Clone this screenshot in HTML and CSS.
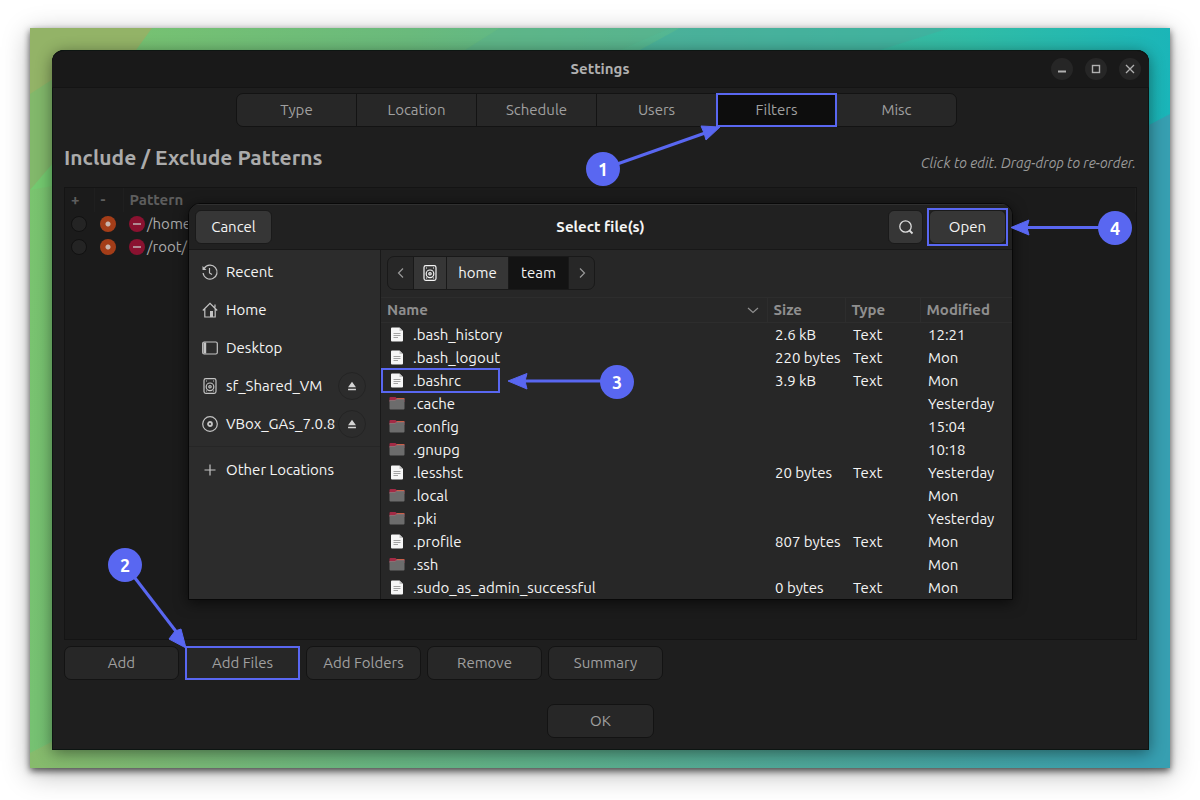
FILE: index.html
```html
<!DOCTYPE html>
<html lang="en">
<head>
<meta charset="utf-8">
<title>Settings</title>
<link rel="stylesheet" href="styles.css">
</head>
<body>
<svg class="sprite" aria-hidden="true">
  <symbol id="i-file" viewBox="0 0 16 16">
    <path d="M2 1.500a1 1 0 0 1 1-1h7.500l3.500 3.500v9.500a1 1 0 0 1-1 1h-10a1 1 0 0 1-1-1z" fill="#f6f6f6"/>
    <path d="M10.500 0.500l3.500 3.500h-3.500z" fill="#c4c4c4"/>
    <path d="M4.500 6.500h7M4.500 8.500h7M4.500 10.500h4.500" stroke="#a2a2a2" stroke-width="1"/>
  </symbol>
  <symbol id="i-folder" viewBox="0 0 16 16">
    <path d="M.5 2a1 1 0 0 1 1-1h5l1 1h7a1 1 0 0 1 1 1v3h-15z" fill="#a32a45"/>
    <path d="M8 2h6.500a1 1 0 0 1 1 1h-8z" fill="#d9583b"/>
    <path d="M.5 4.500h5.500l1.500-1.300h8v9.300a1 1 0 0 1-1 1h-13a1 1 0 0 1-1-1z" fill="#6c6c6c"/>
    <path d="M.5 4.500h5.500l1.500-1.300h8" stroke="#8d8080" stroke-width=".7" fill="none"/>
  </symbol>
  <symbol id="i-disk" viewBox="0 0 16 16">
    <g fill="none" stroke="currentColor" stroke-width="1.200">
      <rect x="2" y="0.700" width="12" height="14.600" rx="1.800"/>
      <circle cx="8" cy="8.800" r="3.800"/><circle cx="8" cy="8.800" r="1.200"/>
    </g>
    <path d="M4 2.500h1v1h-1zM11 2.500h1v1h-1zM4 12.500h1v1h-1zM11 12.500h1v1h-1z" fill="currentColor"/>
  </symbol>
  <symbol id="i-eject" viewBox="0 0 16 16"><path d="M8 3l4.500 6.500h-9zM3.500 11h9v1.800h-9z" fill="currentColor"/></symbol>
</svg>

<main class="page">
<div class="desktop">
  <svg class="wallpaper" viewBox="0 0 1140 740" preserveAspectRatio="none" aria-hidden="true">
    <defs>
      <linearGradient id="sky" x1="0" y1="0" x2="1" y2="0.100">
        <stop offset="0" stop-color="#7bc46e"/><stop offset=".33" stop-color="#6aba7c"/>
        <stop offset=".6" stop-color="#50b697"/><stop offset=".82" stop-color="#30bca6"/>
        <stop offset="1" stop-color="#1ab5b9"/>
      </linearGradient>
      <linearGradient id="ground" x1="0" y1="0" x2="1" y2="0">
        <stop offset="0" stop-color="#87bb6c"/><stop offset=".3" stop-color="#68b580"/>
        <stop offset=".65" stop-color="#50a897"/><stop offset="1" stop-color="#389fb0"/>
      </linearGradient>
    </defs>
    <rect width="1140" height="740" fill="url(#sky)"/>
    <path d="M0 725L60 694H1140V740H0z" fill="url(#ground)"/>
    <path d="M1100 107L1140 86V740H1100z" fill="#379fb1"/>
    <path d="M0 0H122L96 36L0 162z" fill="#93b367"/>
    <path d="M0 66L40 40V125L0 162z" fill="#82b86b"/>
    <path d="M0 162L40 115V155z" fill="#74ca70"/>
    <path d="M435 22L470 0H640L590 22z" fill="#5ab18c" opacity=".5"/>
    <path d="M610 22L650 0H920L850 22z" fill="#45ad9c" opacity=".65"/>
  </svg>

  <section class="window">
    <header class="titlebar">
      <h1>Settings</h1>
      <div class="controls">
        <button aria-label="Minimize"><svg viewBox="0 0 22 22"><path d="M7 13.500h8" stroke="currentColor" stroke-width="2"/></svg></button>
        <button aria-label="Maximize"><svg viewBox="0 0 22 22"><rect x="7.500" y="7.500" width="7" height="7" fill="none" stroke="currentColor" stroke-width="1.400"/></svg></button>
        <button aria-label="Close"><svg viewBox="0 0 22 22"><path d="M7 7l8 8M15 7l-8 8" stroke="currentColor" stroke-width="1.300"/></svg></button>
      </div>
    </header>

    <nav class="tabs">
      <button>Type</button><button>Location</button><button>Schedule</button><button>Users</button><button class="active marked">Filters</button><button>Misc</button>
    </nav>

    <div class="heading">
      <h2>Include / Exclude Patterns</h2>
      <p>Click to edit. Drag-drop to re-order.</p>
    </div>

    <div class="patterns">
      <table>
        <thead><tr><th>+</th><th>-</th><th>Pattern</th></tr></thead>
        <tbody>
          <tr>
            <td><input type="radio" name="p1" aria-label="Include /home"></td>
            <td><input type="radio" name="p1" aria-label="Exclude /home" checked></td>
            <td><span class="pattern"><svg viewBox="0 0 16 16" aria-hidden="true"><circle cx="8" cy="8" r="8" fill="#8a1230"/><path d="M4 8h8" stroke="#b9a9ad" stroke-width="1.600"/></svg>/home</span></td>
          </tr>
          <tr>
            <td><input type="radio" name="p2" aria-label="Include /root/"></td>
            <td><input type="radio" name="p2" aria-label="Exclude /root/" checked></td>
            <td><span class="pattern"><svg viewBox="0 0 16 16" aria-hidden="true"><circle cx="8" cy="8" r="8" fill="#8a1230"/><path d="M4 8h8" stroke="#b9a9ad" stroke-width="1.600"/></svg>/root/</span></td>
          </tr>
        </tbody>
      </table>
    </div>

    <div class="actions">
      <button>Add</button><button class="marked">Add Files</button><button>Add Folders</button><button>Remove</button><button>Summary</button>
    </div>
    <footer class="footer"><button>OK</button></footer>

    <section class="dialog" role="dialog" aria-label="Select file(s)">
      <header class="dialog-head">
        <button class="cancel">Cancel</button>
        <h2>Select file(s)</h2>
        <div class="head-end">
          <button class="search" aria-label="Search"><svg viewBox="0 0 16 16"><circle cx="7.500" cy="7.500" r="5.700" fill="none" stroke="currentColor" stroke-width="1.300"/><path d="M11.500 11.500l3 3" stroke="currentColor" stroke-width="1.800"/></svg></button>
          <button class="open">Open</button>
        </div>
      </header>
      <div class="dialog-body">
        <aside class="places">
          <ul>
            <li><a href="#"><svg viewBox="0 0 16 16"><path d="M2.200 4.300A7 7 0 1 1 1.100 9" fill="none" stroke="currentColor" stroke-width="1.200"/><path d="M.5 2v4h4z" fill="currentColor"/><path d="M7.500 4v5l2.500 1.500" fill="none" stroke="currentColor" stroke-width="1.200"/></svg>Recent</a></li>
            <li><a href="#"><svg viewBox="0 0 16 16"><path d="M.8 8.500L8 1.300l7.200 7.200M2.800 7v8h10.400v-8M13 2.500v3" fill="none" stroke="currentColor" stroke-width="1.200"/><path d="M8 9h3v6H8z" fill="currentColor"/></svg>Home</a></li>
            <li><a href="#"><svg viewBox="0 0 16 16"><rect x=".7" y="2" width="14.600" height="12" rx="1.500" fill="none" stroke="currentColor" stroke-width="1.200"/><path d="M1.500 2.500h2.700v11h-2.700z" fill="currentColor"/></svg>Desktop</a></li>
            <li><a href="#"><svg><use href="#i-disk"/></svg>sf_Shared_VM</a><button class="eject" aria-label="Eject sf_Shared_VM"><svg><use href="#i-eject"/></svg></button></li>
            <li><a href="#"><svg viewBox="0 0 16 16"><g fill="none" stroke="currentColor"><circle cx="8" cy="8" r="7.300" stroke-width="1.200"/><circle cx="8" cy="8" r="2" stroke-width="1.800"/></g></svg>VBox_GAs_7.0.8</a><button class="eject" aria-label="Eject VBox_GAs_7.0.8"><svg><use href="#i-eject"/></svg></button></li>
            <li class="other"><a href="#"><svg viewBox="0 0 16 16"><path d="M2.500 8h11M8 2.500v11" stroke="currentColor" stroke-width="1.200"/></svg>Other Locations</a></li>
          </ul>
        </aside>
        <div class="files">
          <nav class="path">
            <button class="step" aria-label="Back"><svg viewBox="0 0 12 12"><path d="M8 1.500L3.500 6 8 10.500" fill="none" stroke="currentColor" stroke-width="1.200"/></svg></button>
            <button class="root" aria-label="File system"><svg><use href="#i-disk"/></svg></button>
            <button class="crumb">home</button>
            <button class="crumb current">team</button>
            <button class="step" aria-label="Forward"><svg viewBox="0 0 12 12"><path d="M4 1.500L8.500 6 4 10.500" fill="none" stroke="currentColor" stroke-width="1.200"/></svg></button>
          </nav>
          <table>
            <colgroup><col><col class="c-size"><col class="c-type"><col class="c-mod"></colgroup>
            <thead><tr><th><span class="sort">Name<svg viewBox="0 0 12 12" aria-hidden="true"><path d="M1 4l5 4.500L11 4" fill="none" stroke="currentColor" stroke-width="1.200"/></svg></span></th><th>Size</th><th>Type</th><th>Modified</th></tr></thead>
            <tbody>
              <tr><td><span class="name"><svg><use href="#i-file"/></svg>.bash_history</span></td><td>2.6 kB</td><td>Text</td><td>12:21</td></tr>
              <tr><td><span class="name"><svg><use href="#i-file"/></svg>.bash_logout</span></td><td>220 bytes</td><td>Text</td><td>Mon</td></tr>
              <tr><td><span class="name marked"><svg><use href="#i-file"/></svg>.bashrc</span></td><td>3.9 kB</td><td>Text</td><td>Mon</td></tr>
              <tr><td><span class="name"><svg><use href="#i-folder"/></svg>.cache</span></td><td></td><td></td><td>Yesterday</td></tr>
              <tr><td><span class="name"><svg><use href="#i-folder"/></svg>.config</span></td><td></td><td></td><td>15:04</td></tr>
              <tr><td><span class="name"><svg><use href="#i-folder"/></svg>.gnupg</span></td><td></td><td></td><td>10:18</td></tr>
              <tr><td><span class="name"><svg><use href="#i-file"/></svg>.lesshst</span></td><td>20 bytes</td><td>Text</td><td>Yesterday</td></tr>
              <tr><td><span class="name"><svg><use href="#i-folder"/></svg>.local</span></td><td></td><td></td><td>Mon</td></tr>
              <tr><td><span class="name"><svg><use href="#i-folder"/></svg>.pki</span></td><td></td><td></td><td>Yesterday</td></tr>
              <tr><td><span class="name"><svg><use href="#i-file"/></svg>.profile</span></td><td>807 bytes</td><td>Text</td><td>Mon</td></tr>
              <tr><td><span class="name"><svg><use href="#i-folder"/></svg>.ssh</span></td><td></td><td></td><td>Mon</td></tr>
              <tr><td><span class="name"><svg><use href="#i-file"/></svg>.sudo_as_admin_successful</span></td><td>0 bytes</td><td>Text</td><td>Mon</td></tr>
            </tbody>
          </table>
        </div>
      </div>
    </section>
  </section>

  <div class="callout one"><svg viewBox="0 0 134 60"><path d="M17 42L122 5" stroke-width="3"/><path d="M134 0L115 -1L118 6L120 13z"/></svg><b>1</b></div>
  <div class="callout two"><svg viewBox="0 0 78 100"><path d="M17 17L70 86" stroke-width="3"/><path d="M78 100L73 81L67 83L61 91z"/></svg><b>2</b></div>
  <div class="callout three"><svg viewBox="0 0 126 34"><path d="M109 16H16" stroke-width="3"/><path d="M0 16L19 8.500L17 16L19 24z"/></svg><b>3</b></div>
  <div class="callout four"><svg viewBox="0 0 121 34"><path d="M104 16.500H16" stroke-width="3"/><path d="M0 16.500L18 9L16 16.500L18 24z"/></svg><b>4</b></div>
</div>
</main>
</body>
</html>
```

FILE: styles.css
```css
* { box-sizing: border-box; }

body {
  margin: 0;
  background: #fff;
  color: #fff;
  font: 15px/20px Ubuntu, "Noto Sans", sans-serif;
}

button {
  font: inherit;
  color: inherit;
  margin: 0;
  padding: 0;
  border: 1px solid #131313;
  background: #272727;
}

h1, h2, p, ul { margin: 0; padding: 0; }
h1, h2 { font-size: 15px; }
table { border-collapse: collapse; width: 100%; }
th, td { padding: 0; text-align: left; }
svg { display: block; flex: none; overflow: visible; }
.sprite { position: absolute; width: 0; height: 0; }

.page { display: flex; min-height: 100vh; padding: 28px 30px 32px; }

.desktop {
  position: relative;
  display: flex;
  flex: 1;
  padding: 22px 21px 18px 22px;
  box-shadow: 0 3px 7px rgba(0, 0, 0, .65), 0 6px 26px rgba(0, 0, 0, .28);
}

.wallpaper { position: absolute; inset: 0; width: 100%; height: 100%; }

.window {
  position: relative;
  display: flex;
  flex: 1;
  flex-direction: column;
  border-radius: 12px 12px 0 0;
  background: #1e1e1e;
  color: #a0a0a0;
  box-shadow: inset 0 0 0 1px #0d1512, 0 3px 16px rgba(0, 0, 0, .45);
}

.titlebar {
  display: grid;
  grid-template-columns: 1fr auto 1fr;
  align-items: center;
  height: 38px;
  padding: 0 8px 0 7px;
  border-bottom: 1px solid #141414;
  border-radius: 12px 12px 0 0;
  background: #191919;
  box-shadow: inset 0 1px #0d1512;
}
.titlebar h1 { grid-column: 2; color: #b0b0b0; }
.controls { display: flex; justify-content: flex-end; gap: 12px; }
.controls button { width: 22px; height: 22px; border: 0; border-radius: 50%; background: #262626; color: #b0b0b0; }

.tabs { display: flex; justify-content: center; margin: 5px 8px 0 0; }
.tabs button { width: 121px; height: 34px; margin-right: -1px; }
.tabs button:first-child { border-radius: 7px 0 0 7px; }
.tabs button:last-child { border-radius: 0 7px 7px 0; margin-right: 0; }
.tabs .active { background: #0d0d0d; }

.marked { position: relative; outline: 2px solid #5967f1; outline-offset: -2px; }

.heading { display: flex; justify-content: space-between; align-items: center; height: 60px; padding: 0 13px 0 12px; }
.heading h2 { font-size: 21px; line-height: 28px; color: #ababab; }
.heading p { padding-top: 11px; font-size: 14px; font-style: italic; color: #9a9a9a; }

.patterns { flex: 1; min-height: 400px; margin: 0 12px; border: 1px solid #141414; background: #1b1b1b; }
.patterns th { height: 24px; padding-left: 6px; color: #5e5e5e; border-right: 1px solid #1f1f1f; }
.patterns th:nth-child(1), .patterns th:nth-child(2) { width: 29px; }
.patterns td { height: 23px; padding-left: 6px; color: #aaa; }
.patterns input {
  display: block;
  width: 16px;
  height: 16px;
  margin: 0;
  appearance: none;
  border: 1px solid #111;
  border-radius: 50%;
  background: #242424;
}
.patterns input:checked { border: 0; background: radial-gradient(circle, #c9b5ad 2px, #a43d18 3px); }
.pattern { display: flex; align-items: center; gap: 2px; }
.pattern svg { width: 16px; height: 16px; }

.actions { display: flex; gap: 6px; padding: 6px 12px 0; }
.actions button { width: 115px; height: 34px; border-radius: 7px; }
.actions .marked { border-radius: 0; }
.footer { display: flex; justify-content: center; padding: 24px 0 12px; }
.footer button { width: 107px; height: 34px; border-radius: 7px; }

.dialog {
  position: absolute;
  top: 153px;
  left: 136px;
  right: 136px;
  overflow: hidden;
  border: 1px solid #080808;
  border-radius: 12px 12px 0 0;
  background: #272727;
  color: #f4f4f4;
  box-shadow: 0 3px 14px rgba(0, 0, 0, .6);
}
.dialog-head {
  display: grid;
  grid-template-columns: 1fr auto 1fr;
  align-items: center;
  height: 46px;
  padding: 0 6px;
  border-bottom: 1px solid #181818;
  background: #212121;
  box-shadow: inset 0 1px #303030;
}
.dialog-head button { height: 34px; border-color: #1a1a1a; border-radius: 6px; background: #363636; }
.dialog-head .cancel { width: 77px; }
.head-end { display: flex; justify-content: flex-end; gap: 6px; }
.search { display: grid; place-items: center; width: 35px; }
.search svg { width: 16px; height: 16px; color: #ddd; }
.open { position: relative; width: 77px; }
.open::after { content: ""; position: absolute; inset: -3px; border: 2px solid #5967f1; }

.dialog-body { display: flex; }
.places { width: 192px; padding-top: 3px; border-right: 1px solid #191919; background: #2c2c2c; }
.places ul { list-style: none; }
.places li { display: flex; align-items: center; justify-content: space-between; height: 38px; padding: 0 14px 0 13px; }
.places a { display: flex; align-items: center; gap: 8px; color: inherit; text-decoration: none; white-space: nowrap; }
.places a svg { width: 16px; height: 16px; color: #c4c4c4; }
.places .other { height: 47px; border-top: 1px solid #262626; margin-top: 3px; }
.eject { display: grid; place-items: center; width: 28px; height: 28px; flex: none; margin-left: -8px; border-color: #242424; border-radius: 50%; background: none; }
.eject svg { width: 14px; height: 14px; color: #d5d5d5; }

.files { flex: 1; min-width: 0; }
.path { display: flex; padding: 6px 6px 7px; }
.path button { height: 34px; margin-right: -1px; border-color: #191919; background: #363636; }
.path .step { display: grid; place-items: center; width: 27px; background: #272727; color: #999; }
.path .step:first-child { border-radius: 7px 0 0 7px; }
.path .step:last-child { border-radius: 0 7px 7px 0; }
.path .step svg { width: 12px; height: 12px; }
.root { display: grid; place-items: center; width: 34px; }
.root svg { width: 16px; height: 16px; }
.crumb { width: 63px; }
.path .current { width: 61px; background: #131313; }

.files table { table-layout: fixed; }
.c-size { width: 78px; }
.c-type { width: 75px; }
.c-mod { width: 92px; }
.files th { height: 25px; padding-left: 6px; border: solid #2d2d2d; border-width: 1px 1px 1px 0; color: #8f8f8f; }
.files th:last-child { border-right: 0; }
.files td { height: 23px; padding-left: 8px; line-height: 22px; white-space: nowrap; }
.files td:first-child { padding-left: 1px; }
.sort { display: flex; align-items: center; justify-content: space-between; padding-right: 8px; }
.sort svg { width: 12px; height: 12px; }
.name { display: flex; align-items: center; gap: 8px; width: 117px; height: 23px; padding-left: 7px; }
.name svg { width: 16px; height: 16px; }
.name.marked { outline-offset: -1px; }

.callout { position: absolute; pointer-events: none; }
.callout svg { position: absolute; inset: 0; width: 100%; height: 100%; fill: #5967f1; stroke: #5967f1; }
.callout b {
  position: absolute;
  width: 34px;
  height: 34px;
  border-radius: 50%;
  background: #5967f1;
  font-size: 18px;
  line-height: 34px;
  text-align: center;
}
.one { left: 556px; top: 99px; width: 134px; height: 60px; }
.one b { left: 0; top: 25px; }
.two { left: 78px; top: 520px; width: 78px; height: 100px; }
.two b { left: 0; top: 0; }
.three { left: 478px; top: 337px; width: 126px; height: 34px; }
.three b { right: 0; top: 0; }
.four { left: 981px; top: 183px; width: 121px; height: 34px; }
.four b { right: 0; top: 0; }
```
